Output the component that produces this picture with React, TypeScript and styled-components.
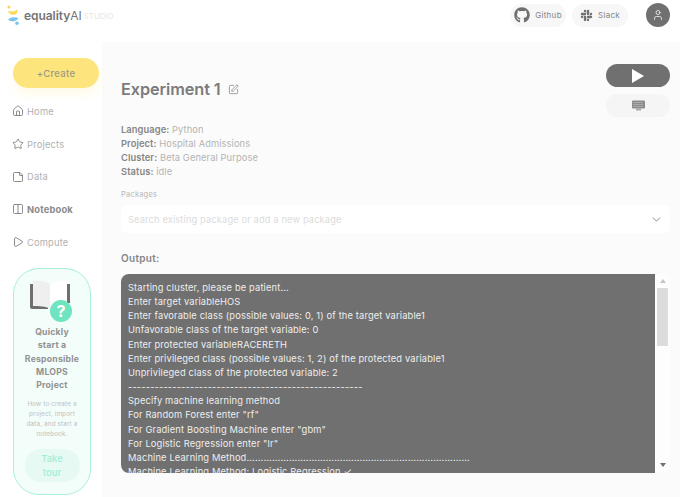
import React from 'react';
import styled, { createGlobalStyle } from 'styled-components';
import { FaGithub, FaSlack } from 'react-icons/fa';
import { Home, Star, StickyNote, Columns2, Play, User, SquarePen, ChevronDown } from 'lucide-react';

const GlobalStyle = createGlobalStyle`
  html, body { margin: 0; padding: 0; height: 100%; overflow: hidden; background: #fbfbfb; }
  body { font-family: Inter, "Liberation Sans", sans-serif; color: #777; }
  * { box-sizing: border-box; }
`;

const Page = styled.div`
  width: 680px;
  height: 497px;
  display: flex;
  flex-direction: column;
  overflow: hidden;
`;

const Header = styled.header`
  height: 42px;
  flex: none;
  background: #fff;
  display: flex;
  align-items: flex-start;
  padding: 3px 10px 0 7px;
`;

const Brand = styled.div`
  display: flex;
  align-items: center;
  height: 24px;
`;

const BrandName = styled.span`
  font-size: 12px;
  font-weight: 600;
  color: #757575;
  margin-left: 4px;
  letter-spacing: -0.05px;
`;

const BrandAi = styled.span`
  font-weight: 400;
`;

const BrandStudio = styled.span`
  font-size: 7.5px;
  color: #e4e4e4;
  margin: 2px 0 0 2px;
  letter-spacing: 0.3px;
`;

const HeaderLinks = styled.div`
  margin-left: auto;
  display: flex;
  align-items: center;
  gap: 6px;
`;

const LinkPill = styled.div`
  height: 23px;
  width: 56px;
  border-radius: 12px;
  background: #f7f7f7;
  display: flex;
  align-items: center;
  justify-content: center;
  gap: 5px;
  font-size: 8px;
  color: #858585;
  letter-spacing: 0.3px;
`;

const Avatar = styled.div`
  width: 24px;
  height: 24px;
  border-radius: 50%;
  background: #707070;
  color: #fff;
  display: flex;
  align-items: center;
  justify-content: center;
  margin-left: 12px;
`;

const Body = styled.div`
  flex: 1;
  min-height: 0;
  display: flex;
`;

const Sidebar = styled.aside`
  width: 102px;
  flex: none;
  background: #fff;
  padding: 16px 11px 0 13px;
  display: flex;
  flex-direction: column;
`;

const CreateButton = styled.div`
  height: 30px;
  width: 86px;
  border-radius: 15px;
  background: #fde47c;
  box-shadow: 0 6px 10px rgba(253, 228, 124, 0.18);
  display: flex;
  align-items: center;
  justify-content: center;
  font-size: 9.5px;
  font-weight: 500;
  color: #9a9a86;
  letter-spacing: 0.3px;
`;

const Nav = styled.nav`
  margin-top: 7px;
  display: flex;
  flex-direction: column;
`;

const NavItem = styled.div<{ $active?: boolean }>`
  height: 32.7px;
  display: flex;
  align-items: center;
  gap: 3px;
  margin-left: -1px;
  font-size: 9.3px;
  font-weight: ${(p) => (p.$active ? 700 : 400)};
  color: ${(p) => (p.$active ? '#8a8a8a' : '#b0b0b0')};
  letter-spacing: 0.2px;
  svg { color: #777; flex: none; }
`;

const TourCard = styled.div`
  margin-top: 9.5px;
  width: 78px;
  height: 227px;
  border: 1px solid #a9f1da;
  border-radius: 26px;
  background: #f3fdfa;
  display: flex;
  flex-direction: column;
  align-items: center;
  padding: 10px 4px 0;
  text-align: center;
`;

const TourArt = styled.svg`
  width: 44px;
  height: 44px;
  flex: none;
`;

const TourTitle = styled.div`
  margin-top: 3px;
  font-size: 8.7px;
  line-height: 13.3px;
  font-weight: 700;
  color: #929292;
  letter-spacing: 0.2px;
`;

const TourText = styled.div`
  margin-top: 7px;
  font-size: 6.3px;
  line-height: 10px;
  color: #c0c0c0;
  letter-spacing: 0.15px;
`;

const TourButton = styled.div`
  margin-top: 10px;
  width: 55px;
  height: 33px;
  flex: none;
  border-radius: 16px;
  background: #e6faf3;
  color: #a2eed6;
  font-size: 9.5px;
  line-height: 14px;
  font-weight: 500;
  display: flex;
  align-items: center;
  justify-content: center;
`;

const Main = styled.main`
  flex: 1;
  min-width: 0;
  padding: 22px 10px 0 19px;
  display: flex;
  flex-direction: column;
`;

const TopRow = styled.div`
  display: flex;
  justify-content: space-between;
  height: 59px;
`;

const TitleRow = styled.div`
  display: flex;
  align-items: center;
  gap: 7px;
  height: 50px;
`;

const Title = styled.h1`
  margin: 0;
  font-size: 16.3px;
  font-weight: 600;
  color: #7b7b7b;
  letter-spacing: -0.1px;
`;

const Actions = styled.div`
  width: 64px;
  display: flex;
  flex-direction: column;
  gap: 7px;
`;

const RunButton = styled.div<{ $ghost?: boolean }>`
  height: 23px;
  border-radius: 12px;
  background: ${(p) => (p.$ghost ? '#f5f5f5' : '#707070')};
  color: #fff;
  display: flex;
  align-items: center;
  justify-content: center;
`;

const Meta = styled.div`
  font-size: 9.3px;
  line-height: 14px;
  color: #b4b4b4;
  letter-spacing: 0.1px;
`;

const MetaLabel = styled.b`
  font-weight: 600;
  color: #858585;
`;

const FieldLabel = styled.div`
  margin-top: 10px;
  font-size: 7.5px;
  line-height: 12px;
  color: #b8b8b8;
  letter-spacing: 0.2px;
`;

const SearchBox = styled.div`
  margin-top: 4px;
  height: 28px;
  border-radius: 6px;
  background: #fff;
  display: flex;
  align-items: center;
  justify-content: space-between;
  padding: 0 7px;
  font-size: 9.3px;
  color: #dcdcdc;
  letter-spacing: 0.13px;
  svg { color: #777; }
`;

const OutputLabel = styled.div`
  margin-top: 18px;
  font-size: 10px;
  line-height: 14px;
  font-weight: 600;
  color: #858585;
  letter-spacing: 0.3px;
`;

const OutputPanel = styled.div`
  margin-top: 9px;
  height: 199px;
  display: flex;
  border-radius: 8px;
  overflow: hidden;
`;

const OutputText = styled.pre`
  margin: 0;
  flex: 1;
  min-width: 0;
  padding: 7px 0 0 7px;
  background: #707070;
  color: #eee;
  font-family: Inter, "Liberation Sans", sans-serif;
  font-size: 9.3px;
  line-height: 14.15px;
  letter-spacing: 0.15px;
  white-space: pre;
  overflow: hidden;
`;

const ScrollTrack = styled.div`
  width: 15px;
  flex: none;
  background: #fdfdfd;
  display: flex;
  flex-direction: column;
  align-items: center;
  padding: 5px 0 6px;
`;

const ScrollArrow = styled.div<{ $down?: boolean }>`
  width: 0;
  height: 0;
  border-left: 3.5px solid transparent;
  border-right: 3.5px solid transparent;
  ${(p) => (p.$down ? 'border-top: 4px solid #707070;' : 'border-bottom: 4px solid #c4c4c4;')}
  ${(p) => (p.$down ? 'margin-top: auto;' : '')}
`;

const ScrollThumb = styled.div`
  margin-top: 5px;
  width: 11px;
  height: 58px;
  background: #dcdcdc;
`;

const outputLines = [
  'Starting cluster, please be patient...',
  'Enter target variableHOS',
  'Enter favorable class (possible values: 0, 1) of the target variable1',
  'Unfavorable class of the target variable: 0',
  'Enter protected variableRACERETH',
  'Enter privileged class (possible values: 1, 2) of the protected variable1',
  'Unprivileged class of the protected variable: 2',
  '-----------------------------------------------------',
  'Specify machine learning method',
  'For Random Forest enter "rf"',
  'For Gradient Boosting Machine enter "gbm"',
  'For Logistic Regression enter "lr"',
  'Machine Learning Method...............................................................................',
  'Machine Learning Method: Logistic Regression ✓',
];

const navItems = [
  { label: 'Home', Icon: Home },
  { label: 'Projects', Icon: Star },
  { label: 'Data', Icon: StickyNote },
  { label: 'Notebook', Icon: Columns2, active: true },
  { label: 'Compute', Icon: Play },
];

const Logo = () => (
  <svg width="13" height="22" viewBox="0 0 13 22">
    <circle cx="2" cy="3" r="1.600" fill="#fbd75b" />
    <path d="M1 6.500c3 1.600 7 1.200 9-1 1.500 3-1 5.500-4.500 5.300C3.500 10.700 1.500 9 1 6.500z" fill="#fbd75b" />
    <path d="M1 15.500c3-2.400 7-2.600 10.500-1.500-1.500 2.600-4 3.500-6.500 3.300-1.600-.2-3-.8-4-1.800z" fill="#7cc4ee" />
    <circle cx="10" cy="19.300" r="1.800" fill="#7cc4ee" />
  </svg>
);

const App: React.FC = () => {
  return (
    <Page>
      <GlobalStyle />
      <Header>
        <Brand>
          <Logo />
          <BrandName>
            equality<BrandAi>AI</BrandAi>
          </BrandName>
          <BrandStudio>STUDIO</BrandStudio>
        </Brand>
        <HeaderLinks>
          <LinkPill>
            <FaGithub size={16} color="#707070" />
            Github
          </LinkPill>
          <LinkPill>
            <FaSlack size={13} color="#707070" />
            Slack
          </LinkPill>
          <Avatar>
            <User size={12} strokeWidth={1.5} />
          </Avatar>
        </HeaderLinks>
      </Header>
      <Body>
        <Sidebar>
          <CreateButton>+Create</CreateButton>
          <Nav>
            {navItems.map(({ label, Icon, active }) => (
              <NavItem key={label} $active={active}>
                <Icon size={12} strokeWidth={1.7} />
                {label}
              </NavItem>
            ))}
          </Nav>
          <TourCard>
            <TourArt viewBox="0 0 44 44">
              <path d="M0 5h3v22h15v3H2q-2 0-2-2z" fill="#6f6f6f" />
              <path d="M37 5h3v19h-3z" fill="#6f6f6f" />
              <path d="M3 2c6-1 13 0 17 3v25c-4-3-11-3-17-3z" fill="#efefef" />
              <path d="M20 5c4-3 11-4 17-3v25c-6 0-13 0-17 3z" fill="#fff" />
              <circle cx="31" cy="32" r="11" fill="#6fe4c0" />
              <text x="31" y="38" textAnchor="middle" fontSize="16" fontWeight="700" fill="#fff" fontFamily="Inter, sans-serif">?</text>
            </TourArt>
            <TourTitle>
              Quickly
              <br />
              start a
              <br />
              Responsible
              <br />
              MLOPS
              <br />
              Project
            </TourTitle>
            <TourText>
              How to create a
              <br />
              project, import
              <br />
              data, and start a
              <br />
              notebook.
            </TourText>
            <TourButton>
              Take
              <br />
              tour
            </TourButton>
          </TourCard>
        </Sidebar>
        <Main>
          <TopRow>
            <TitleRow>
              <Title>Experiment 1</Title>
              <SquarePen size={11} color="#808080" strokeWidth={1.6} />
            </TitleRow>
            <Actions>
              <RunButton>
                <svg width="12" height="14" viewBox="0 0 12 14">
                  <path d="M0 0l12 7-12 7z" fill="#fff" />
                </svg>
              </RunButton>
              <RunButton $ghost>
                <svg width="13" height="11" viewBox="0 0 13 11">
                  <rect x="0" y="0.500" width="13" height="8" rx="1" fill="#8c8c8c" />
                  <path d="M1.500 2.500h10M1.500 4.500h10M1.500 6.500h10" stroke="#d8d8d8" strokeWidth="0.800" strokeDasharray="1 1" />
                  <rect x="4" y="8.500" width="5" height="2" fill="#aaa" />
                </svg>
              </RunButton>
            </Actions>
          </TopRow>
          <Meta>
            <div>
              <MetaLabel>Language:</MetaLabel> Python
            </div>
            <div>
              <MetaLabel>Project:</MetaLabel> Hospital Admissions
            </div>
            <div>
              <MetaLabel>Cluster:</MetaLabel> Beta General Purpose
            </div>
            <div>
              <MetaLabel>Status:</MetaLabel> idle
            </div>
          </Meta>
          <FieldLabel>Packages</FieldLabel>
          <SearchBox>
            Search existing package or add a new package
            <ChevronDown size={13} strokeWidth={1.6} />
          </SearchBox>
          <OutputLabel>Output:</OutputLabel>
          <OutputPanel>
            <OutputText>{outputLines.join('\n')}</OutputText>
            <ScrollTrack>
              <ScrollArrow />
              <ScrollThumb />
              <ScrollArrow $down />
            </ScrollTrack>
          </OutputPanel>
        </Main>
      </Body>
    </Page>
  );
};

export default App;
